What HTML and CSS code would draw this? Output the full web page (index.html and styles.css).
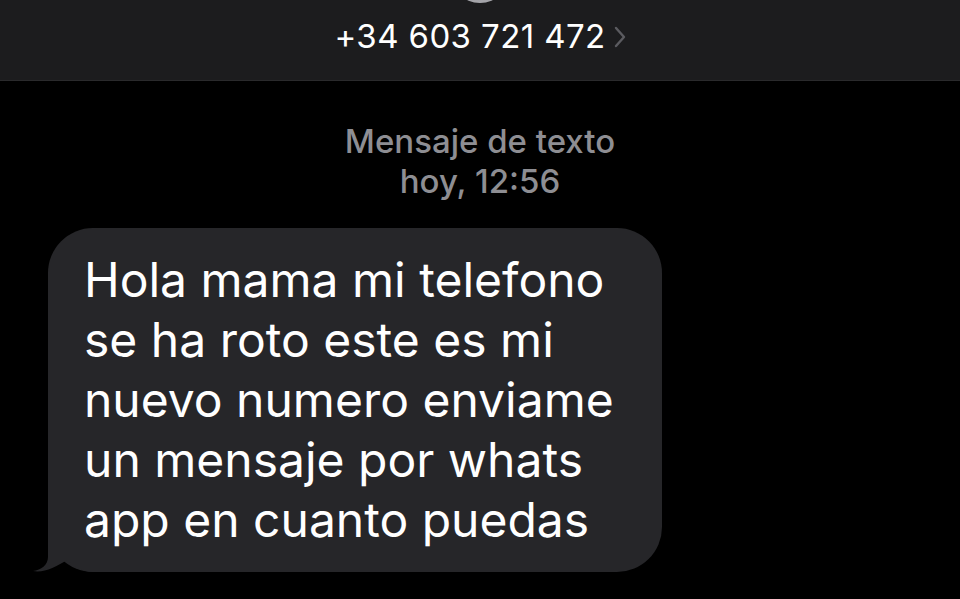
FILE: index.html
```html
<!DOCTYPE html>
<html lang="es">

<head>
    <meta charset="UTF-8">
    <meta name="viewport" content="width=device-width, initial-scale=1.0">
    <title>+34 603 721 472</title>
    <link rel="stylesheet" href="styles.css">
</head>

<body>
    <header class="contact-bar">
        <div class="avatar"></div>
        <div class="contact-name">
            <span>+34 603 721 472</span>
            <svg class="chevron" width="12" height="22" viewBox="0 0 12 22">
                <path d="M2 2 L10 11 L2 20" fill="none" stroke="#5b5b60" stroke-width="2.4" stroke-linecap="round" stroke-linejoin="round" />
            </svg>
        </div>
    </header>

    <main class="thread">
        <div class="timestamp">
            <div>Mensaje de texto</div>
            <div>hoy, 12:56</div>
        </div>

        <div class="bubble">
            Hola mama mi telefono<br>
            se ha roto este es mi<br>
            nuevo numero enviame<br>
            un mensaje por whats<br>
            app en cuanto puedas
            <svg class="tail" width="60" height="45" viewBox="0 0 60 45">
                <path d="M16 0 L16 30 C16 38 9 43 1 44 C12 46 24 40 35 33 C42 40 52 45 60 45 L60 0 Z" fill="#262629" />
            </svg>
        </div>
    </main>
</body>

</html>
```

FILE: styles.css
```css
body {
    font-family: Inter, 'Noto Sans', sans-serif;
    background-color: #000;
    color: #fff;
    margin: 0;
    padding: 0;
    overflow: hidden;
}

/* top bar with the contact */
.contact-bar {
    background-color: #1c1c1e;
    height: 80px;
    border-bottom: 1px solid #2a2a2c;
    display: flex;
    flex-direction: column;
    align-items: center;
    overflow: hidden;
}

.avatar {
    width: 60px;
    height: 60px;
    margin-top: -57px;
    border-radius: 50%;
    background: linear-gradient(180deg, #6d6d72, #a5a5aa);
}

.contact-name {
    margin-top: 13px;
    display: flex;
    align-items: center;
    gap: 8px;
    font-size: 33px;
    line-height: 40px;
    letter-spacing: 0.4px;
}

.chevron {
    margin-top: 2px;
}

/* message thread */
.thread {
    padding: 0 0 0 48px;
}

.timestamp {
    margin-top: 40px;
    margin-left: -48px;
    text-align: center;
    color: #8e8e93;
    font-size: 33px;
    line-height: 40px;
    font-weight: 500;
}

.bubble {
    position: relative;
    z-index: 0;
    margin-top: 27px;
    width: 542px;
    padding: 22px 36px;
    background-color: #262629;
    border-radius: 45px;
    font-size: 48px;
    line-height: 60px;
    white-space: nowrap;
}

.tail {
    position: absolute;
    z-index: -1;
    left: -16px;
    bottom: 0;
}
```
